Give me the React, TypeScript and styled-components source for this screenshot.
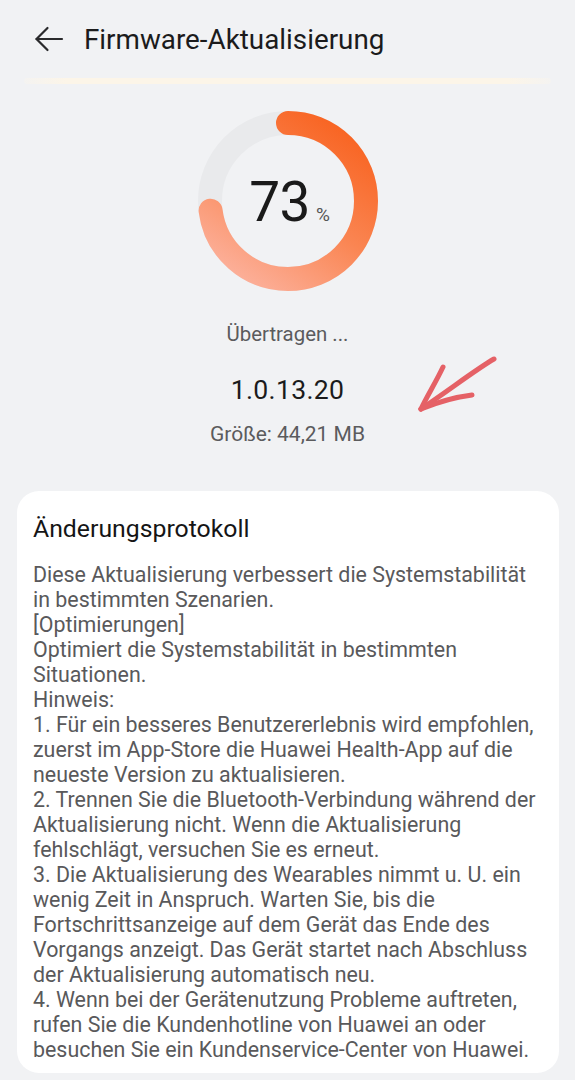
import React from "react";
import styled, { createGlobalStyle } from "styled-components";

const Global = createGlobalStyle`
  html, body { margin: 0; padding: 0; background: #f1f2f4; }
  body { font-family: Roboto, "Noto Sans", Arial, sans-serif; -webkit-font-smoothing: antialiased; }
`;

const Page = styled.div`
  width: 575px;
  min-height: 1080px;
  background: #f1f2f4;
  display: flex;
  flex-direction: column;
  overflow: hidden;
`;

const Header = styled.header`
  height: 78px;
  display: flex;
  align-items: center;
  padding: 0 0 0 33px;
  gap: 19px;
  box-sizing: border-box;
`;

const BackButton = styled.button`
  width: 32px;
  height: 32px;
  padding: 0;
  border: none;
  background: none;
  display: flex;
  align-items: center;
  justify-content: center;
`;

const Title = styled.h1`
  margin: 0;
  font-size: 27.8px;
  font-weight: 400;
  color: #1b1b1c;
`;

const Glow = styled.div`
  margin: 0 24px;
  height: 6px;
  border-radius: 3px;
  background: linear-gradient(90deg, rgba(252,246,234,0.3), #fcf5e8 8%, #fcf5e8 92%, rgba(252,246,234,0.3));
`;

const Status = styled.section`
  display: flex;
  flex-direction: column;
  align-items: center;
  padding-top: 26px;
  position: relative;
`;

const RingWrap = styled.div`
  width: 182px;
  height: 182px;
  position: relative;
  display: flex;
  align-items: center;
  justify-content: center;
`;

const RingSvg = styled.svg`
  position: absolute;
  inset: 0;
`;

const Percent = styled.div`
  position: relative;
  display: flex;
  align-items: baseline;
  margin-left: 4px;
  margin-top: 2px;
`;

const Big = styled.span`
  font-size: 55px;
  font-weight: 400;
  color: #1a1a1a;
  letter-spacing: -0.5px;
`;

const Small = styled.span`
  font-size: 19px;
  color: #555;
  margin-left: 6px;
`;

const Caption = styled.div`
  margin-top: 29px;
  font-size: 20.4px;
  line-height: 26px;
  color: #5b5b5d;
`;

const Version = styled.div`
  margin-top: 27px;
  font-size: 26.6px;
  line-height: 32px;
  color: #1b1b1c;
  letter-spacing: 0.3px;
`;

const Size = styled.div`
  margin-top: 15px;
  font-size: 21px;
  line-height: 26px;
  color: #5b5b5d;
`;

const Arrow = styled.svg`
  position: absolute;
  left: 412px;
  top: 266px;
`;

const Card = styled.section`
  margin: 44px 16px 0 17px;
  background: #ffffff;
  border-radius: 22px;
  padding: 21px 17px 14px 16px;
  height: 582px;
  box-sizing: border-box;
`;

const CardTitle = styled.h2`
  margin: 0;
  font-size: 24.8px;
  font-weight: 400;
  color: #151516;
  line-height: 34px;
`;

const Body = styled.p`
  margin: 16px 0 0;
  font-size: 21.4px;
  line-height: 25px;
  color: #59595b;
  white-space: nowrap;
`;

const lines = [
  "Diese Aktualisierung verbessert die Systemstabilität",
  "in bestimmten Szenarien.",
  "[Optimierungen]",
  "Optimiert die Systemstabilität in bestimmten",
  "Situationen.",
  "Hinweis:",
  "1. Für ein besseres Benutzererlebnis wird empfohlen,",
  "zuerst im App-Store die Huawei Health-App auf die",
  "neueste Version zu aktualisieren.",
  "2. Trennen Sie die Bluetooth-Verbindung während der",
  "Aktualisierung nicht. Wenn die Aktualisierung",
  "fehlschlägt, versuchen Sie es erneut.",
  "3. Die Aktualisierung des Wearables nimmt u. U. ein",
  "wenig Zeit in Anspruch. Warten Sie, bis die",
  "Fortschrittsanzeige auf dem Gerät das Ende des",
  "Vorgangs anzeigt. Das Gerät startet nach Abschluss",
  "der Aktualisierung automatisch neu.",
  "4. Wenn bei der Gerätenutzung Probleme auftreten,",
  "rufen Sie die Kundenhotline von Huawei an oder",
  "besuchen Sie ein Kundenservice-Center von Huawei.",
];

function Ring({ value }: { value: number }) {
  const r = 78;
  const d = `M91 13 A${r} ${r} 0 1 1 91 169 A${r} ${r} 0 1 1 91 13`;
  return (
    <RingSvg width="182" height="182" viewBox="0 0 182 182">
      <defs>
        <linearGradient id="rg" gradientUnits="userSpaceOnUse" x1="140" y1="5" x2="30" y2="165">
          <stop offset="0" stopColor="#f8621f" />
          <stop offset="0.5" stopColor="#fa8552" />
          <stop offset="1" stopColor="#fcb19c" />
        </linearGradient>
      </defs>
      <circle cx="91" cy="91" r={r} fill="none" stroke="#e9eaec" strokeWidth="24" />
      <path
        d={d}
        fill="none"
        stroke="url(#rg)"
        strokeWidth="24"
        strokeLinecap="round"
        pathLength={100}
        strokeDasharray={`${value} 100`}
      />
    </RingSvg>
  );
}

export default function App() {
  return (
    <Page>
      <Global />
      <Header>
        <BackButton aria-label="Zurück">
          <svg width="30" height="30" viewBox="0 0 30 30" fill="none" stroke="#2a2a2c" strokeWidth="2.2" strokeLinecap="round" strokeLinejoin="round">
            <path d="M2.5 15 H28" />
            <path d="M13.5 4 L2.5 15 L13.5 26" />
          </svg>
        </BackButton>
        <Title>Firmware-Aktualisierung</Title>
      </Header>
      <Glow />
      <Status>
        <RingWrap>
          <Ring value={73} />
          <Percent>
            <Big>73</Big>
            <Small>%</Small>
          </Percent>
        </RingWrap>
        <Caption>Übertragen ...</Caption>
        <Version>1.0.13.20</Version>
        <Size>Größe: 44,21 MB</Size>
        <Arrow width="90" height="70" viewBox="0 0 90 70" fill="none" stroke="#e4555b" strokeWidth="5" strokeLinecap="round" strokeLinejoin="round" opacity="0.92">
          <path d="M82 9 C 66 18, 40 38, 9 59" />
          <path d="M31 17 C 24 32, 15 46, 9 59" />
          <path d="M9 59 C 26 52, 44 47, 60 45" />
        </Arrow>
      </Status>
      <Card>
        <CardTitle>Änderungsprotokoll</CardTitle>
        <Body>
          {lines.map((l, i) => (
            <React.Fragment key={i}>
              {l}
              {i < lines.length - 1 && <br />}
            </React.Fragment>
          ))}
        </Body>
      </Card>
    </Page>
  );
}
